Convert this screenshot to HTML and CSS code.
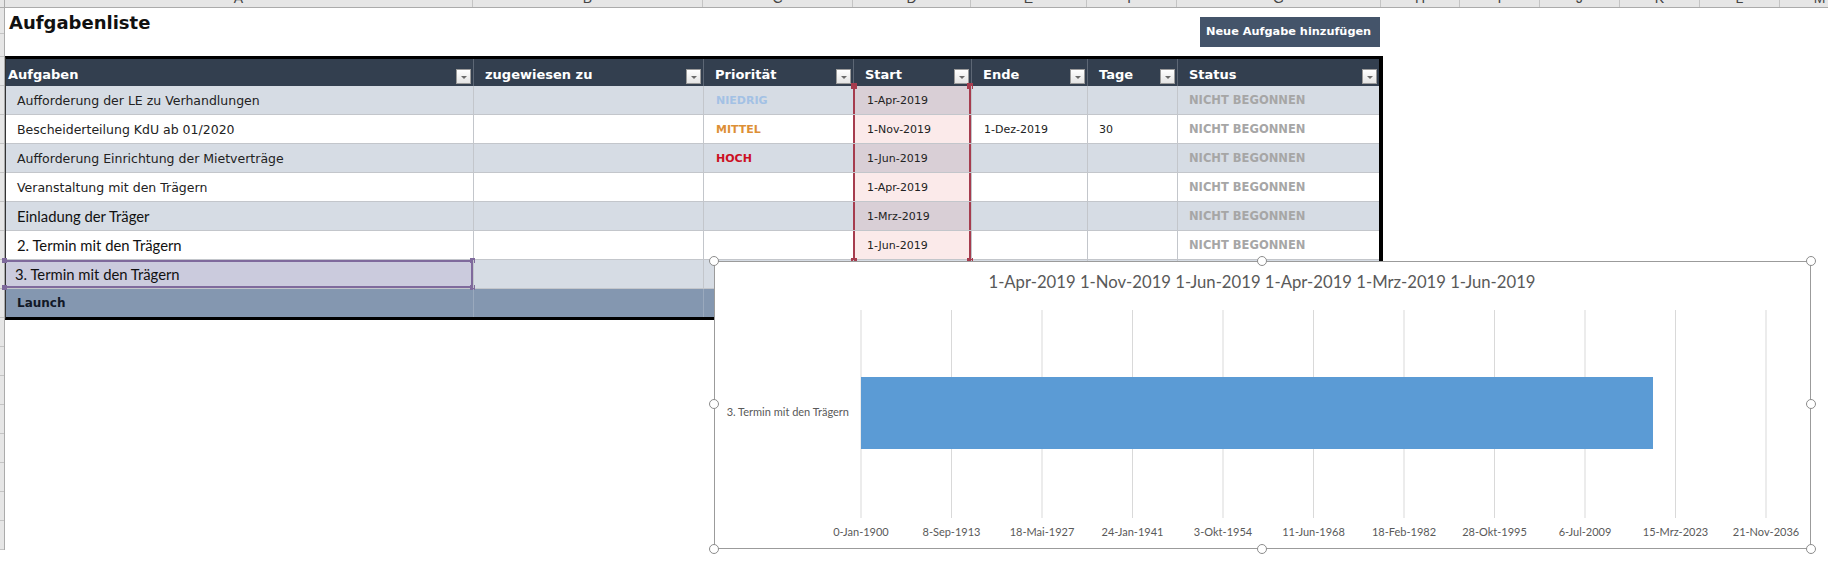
FILE: index.html
```html
<!DOCTYPE html>
<html lang="de">
<head>
<meta charset="utf-8">
<title>Aufgabenliste</title>
<link rel="stylesheet" href="styles.css">
</head>
<body>
<div class="app">
  <div class="colhdr">
    <div class="ch corner"></div>
    <div class="ch w-a"><span>A</span></div>
    <div class="ch w-b"><span>B</span></div>
    <div class="ch w-c"><span>C</span></div>
    <div class="ch w-d"><span>D</span></div>
    <div class="ch w-e"><span>E</span></div>
    <div class="ch w-f"><span>F</span></div>
    <div class="ch w-g"><span>G</span></div>
    <div class="ch w-h"><span>H</span></div>
    <div class="ch w-i"><span>I</span></div>
    <div class="ch w-i"><span>J</span></div>
    <div class="ch w-i"><span>K</span></div>
    <div class="ch w-i"><span>L</span></div>
    <div class="ch w-i"><span>M</span></div>
  </div>
  <div class="body">
    <div class="rowhdr">
      <div class="rh r-first"></div>
      <div class="rh r-second"></div>
      <div class="rh r-hdr"></div>
      <div class="rh"></div><div class="rh"></div><div class="rh"></div><div class="rh"></div>
      <div class="rh"></div><div class="rh"></div><div class="rh"></div><div class="rh"></div>
      <div class="rh"></div><div class="rh"></div><div class="rh"></div><div class="rh"></div>
      <div class="rh"></div><div class="rh"></div><div class="rh"></div><div class="rh"></div>
    </div>
    <div class="sheet">
      <div class="toprow">
        <h1 class="title">Aufgabenliste</h1>
        <div class="btn">Neue Aufgabe hinzufügen</div>
      </div>
      <div class="tbl">
        <div class="row hdr">
          <div class="cell c1 first"><span>Aufgaben</span><i class="dd"></i></div>
          <div class="cell c2"><span>zugewiesen zu</span><i class="dd"></i></div>
          <div class="cell c3"><span>Priorität</span><i class="dd"></i></div>
          <div class="cell c4"><span>Start</span><i class="dd"></i></div>
          <div class="cell c5"><span>Ende</span><i class="dd"></i></div>
          <div class="cell c6"><span>Tage</span><i class="dd"></i></div>
          <div class="cell c7"><span>Status</span><i class="dd"></i></div>
        </div>
        <div class="row band">
          <div class="cell c1 gothic">Aufforderung der LE zu Verhandlungen</div>
          <div class="cell c2"></div>
          <div class="cell c3 prio low">NIEDRIG</div>
          <div class="cell c4 rng rng-top gothic date"><b class="hd hl"></b><b class="hd hr"></b>1-Apr-2019</div>
          <div class="cell c5"></div>
          <div class="cell c6"></div>
          <div class="cell c7 status">NICHT BEGONNEN</div>
        </div>
        <div class="row">
          <div class="cell c1 gothic">Bescheiderteilung KdU ab 01/2020</div>
          <div class="cell c2"></div>
          <div class="cell c3 prio mid">MITTEL</div>
          <div class="cell c4 rng gothic date">1-Nov-2019</div>
          <div class="cell c5 gothic date">1-Dez-2019</div>
          <div class="cell c6 gothic date">30</div>
          <div class="cell c7 status">NICHT BEGONNEN</div>
        </div>
        <div class="row band">
          <div class="cell c1 gothic">Aufforderung Einrichtung der Mietverträge</div>
          <div class="cell c2"></div>
          <div class="cell c3 prio high">HOCH</div>
          <div class="cell c4 rng gothic date">1-Jun-2019</div>
          <div class="cell c5"></div>
          <div class="cell c6"></div>
          <div class="cell c7 status">NICHT BEGONNEN</div>
        </div>
        <div class="row">
          <div class="cell c1 gothic">Veranstaltung mit den Trägern</div>
          <div class="cell c2"></div>
          <div class="cell c3"></div>
          <div class="cell c4 rng gothic date">1-Apr-2019</div>
          <div class="cell c5"></div>
          <div class="cell c6"></div>
          <div class="cell c7 status">NICHT BEGONNEN</div>
        </div>
        <div class="row band">
          <div class="cell c1 calibri">Einladung der Träger</div>
          <div class="cell c2"></div>
          <div class="cell c3"></div>
          <div class="cell c4 rng gothic date">1-Mrz-2019</div>
          <div class="cell c5"></div>
          <div class="cell c6"></div>
          <div class="cell c7 status">NICHT BEGONNEN</div>
        </div>
        <div class="row">
          <div class="cell c1 calibri">2. Termin mit den Trägern</div>
          <div class="cell c2"></div>
          <div class="cell c3"></div>
          <div class="cell c4 rng rng-bottom gothic date"><b class="bm bl"></b><b class="bm br"></b>1-Jun-2019</div>
          <div class="cell c5"></div>
          <div class="cell c6"></div>
          <div class="cell c7 status">NICHT BEGONNEN</div>
        </div>
        <div class="row band">
          <div class="cell c1 calibri selected"><b class="sh s1"></b><b class="sh s2"></b><b class="sh s3"></b><b class="sh s4"></b>3. Termin mit den Trägern</div>
          <div class="cell c2"></div>
          <div class="cell c3"></div>
          <div class="cell c4"></div>
          <div class="cell c5"></div>
          <div class="cell c6"></div>
          <div class="cell c7"></div>
        </div>
        <div class="row launch">
          <div class="cell c1 launch-t">Launch</div>
          <div class="cell c2"></div>
          <div class="cell c3"></div>
          <div class="cell c4"></div>
          <div class="cell c5"></div>
          <div class="cell c6"></div>
          <div class="cell c7"></div>
        </div>
      </div>
    </div>
  </div>

  <div class="chart">
    <svg class="chart-svg" width="1096" height="287" viewBox="0 0 1096 287" xmlns="http://www.w3.org/2000/svg">
      <text class="ctitle" x="548" y="27" text-anchor="middle">1-Apr-2019 1-Nov-2019 1-Jun-2019 1-Apr-2019 1-Mrz-2019 1-Jun-2019</text>
      <g class="grid">
        <line x1="147" y1="49" x2="147" y2="257"/>
        <line x1="237.5" y1="49" x2="237.5" y2="257"/>
        <line x1="328" y1="49" x2="328" y2="257"/>
        <line x1="418.5" y1="49" x2="418.5" y2="257"/>
        <line x1="509" y1="49" x2="509" y2="257"/>
        <line x1="599.5" y1="49" x2="599.5" y2="257"/>
        <line x1="690" y1="49" x2="690" y2="257"/>
        <line x1="780.5" y1="49" x2="780.5" y2="257"/>
        <line x1="871" y1="49" x2="871" y2="257"/>
        <line x1="961.5" y1="49" x2="961.5" y2="257"/>
        <line x1="1052" y1="49" x2="1052" y2="257"/>
      </g>
      <rect x="147" y="116" width="792" height="72" fill="#5b9bd5"/>
      <text class="clab" x="135" y="155" text-anchor="end">3. Termin mit den Trägern</text>
      <g class="clab">
        <text x="147" y="275" text-anchor="middle">0-Jan-1900</text>
        <text x="237.5" y="275" text-anchor="middle">8-Sep-1913</text>
        <text x="328" y="275" text-anchor="middle">18-Mai-1927</text>
        <text x="418.5" y="275" text-anchor="middle">24-Jan-1941</text>
        <text x="509" y="275" text-anchor="middle">3-Okt-1954</text>
        <text x="599.5" y="275" text-anchor="middle">11-Jun-1968</text>
        <text x="690" y="275" text-anchor="middle">18-Feb-1982</text>
        <text x="780.5" y="275" text-anchor="middle">28-Okt-1995</text>
        <text x="871" y="275" text-anchor="middle">6-Jul-2009</text>
        <text x="961.5" y="275" text-anchor="middle">15-Mrz-2023</text>
        <text x="1052" y="275" text-anchor="middle">21-Nov-2036</text>
      </g>
    </svg>
    <i class="knob k-tl"></i><i class="knob k-tm"></i><i class="knob k-tr"></i>
    <i class="knob k-ml"></i><i class="knob k-mr"></i>
    <i class="knob k-bl"></i><i class="knob k-bm"></i><i class="knob k-br"></i>
  </div>
</div>
</body>
</html>
```

FILE: styles.css
```css
* { box-sizing: border-box; }
html, body { margin: 0; padding: 0; background: #fff; }
.app {
  position: relative;
  width: 1828px;
  height: 573px;
  overflow: hidden;
  font-family: "DejaVu Sans", "Liberation Sans", sans-serif;
  color: #1e1e1e;
}

/* column header strip */
.colhdr {
  display: flex;
  height: 8px;
  background: #e6e6e6;
  border-bottom: 1px solid #ababab;
}
.ch {
  flex: none;
  height: 7px;
  border-right: 1px solid #c4c4c4;
  display: flex;
  justify-content: center;
  align-items: flex-end;
  overflow: hidden;
  font-family: "Liberation Sans", sans-serif;
  font-size: 14px;
  color: #444;
}
.ch span { line-height: 14px; margin-bottom: 2px; }
.corner { width: 5px; border-right-color: #ababab; }
.w-a { width: 468px; }
.w-b { width: 230px; }
.w-c { width: 150px; }
.w-d { width: 118px; }
.w-e { width: 116px; }
.w-f { width: 90px; }
.w-g { width: 204px; }
.w-h { width: 79px; }
.w-i { width: 80px; }

/* body */
.body { display: flex; }
.rowhdr {
  flex: none;
  width: 5px;
  background: #e6e6e6;
  border-right: 1px solid #ababab;
  display: flex;
  flex-direction: column;
}
.rh { height: 29px; border-bottom: 1px solid #c4c4c4; flex: none; }
.r-first { height: 26px; }
.r-second { height: 23px; }

.sheet { flex: none; width: 1378px; }

.toprow {
  height: 48px;
  display: flex;
  justify-content: space-between;
  align-items: flex-start;
}
.title {
  margin: 0;
  padding: 4px 0 0 4px;
  font-size: 18px;
  line-height: 22px;
  font-weight: bold;
  color: #111;
}
.btn {
  margin: 9px 3px 0 0;
  width: 180px;
  height: 30px;
  background: #44546a;
  color: #fff;
  font-weight: bold;
  font-size: 11.3px;
  line-height: 30px;
  padding-left: 6px;
  white-space: nowrap;
}

/* table */
.tbl {
  border-top: 3px solid #000;
  border-bottom: 3px solid #000;
  border-left: 1px solid #333;
  border-right: 4px solid #000;
}
.row {
  display: flex;
  height: 29px;
  border-bottom: 1px solid #c3c6cb;
  background: #fff;
}
.row.band { background: #d6dce4; }
.row.hdr {
  height: 27px;
  background: #333f4f;
  border-bottom: none;
}
.row.launch {
  height: 28px;
  background: #8497b0;
  border-bottom: none;
}
.cell {
  flex: none;
  position: relative;
  height: 100%;
  display: flex;
  align-items: center;
  padding-left: 11px;
  border-left: 1px solid #c3c6cb;
  font-size: 12.5px;
  white-space: nowrap;
}
.cell.c1 { border-left: none; }
.c1 { width: 467px; }
.c2 { width: 230px; }
.c3 { width: 150px; }
.c4 { width: 118px; }
.c5 { width: 116px; }
.c6 { width: 90px; }
.c7 { width: 202px; }

.hdr .cell {
  align-items: flex-end;
  justify-content: space-between;
  padding: 0 2px 2px 11px;
  border-left-color: #5d6775;
  color: #fff;
  font-weight: bold;
  font-size: 13px;
}
.hdr .cell span { line-height: 16px; margin-bottom: 1px; }
.hdr .cell.first { padding-left: 2px; }
.launch .cell { border-left-color: #9aa9bd; }

.dd {
  display: block;
  width: 15px;
  height: 15px;
  background: linear-gradient(#ffffff, #e4e4e4);
  border: 1px solid #9a9a9a;
  position: relative;
}
.dd::after {
  content: "";
  position: absolute;
  left: 4px;
  top: 6px;
  border-left: 3px solid transparent;
  border-right: 3px solid transparent;
  border-top: 3px solid #6b6b6b;
}

.gothic { font-family: "DejaVu Sans", sans-serif; font-size: 12.5px; color: #222; }
.calibri { font-family: "Lato", "Liberation Sans", sans-serif; font-size: 14.8px; color: #111; }
.date { font-size: 11px; }
.c6.date { padding-left: 11px; }
.c5.date { padding-left: 12px; }

.prio { font-weight: bold; font-size: 11px; padding-left: 12px; }
.low { color: #a3c1e4; }
.mid { color: #dd8f36; }
.high { color: #cc1023; }
.status { font-weight: bold; font-size: 11.5px; color: #a6a6a6; }

/* selected start range */
.rng {
  border-left: 2px solid #a63c4e;
  border-right: 2px solid #a63c4e;
  padding-left: 12px;
  background: #fbeaea;
}
.band .rng { background: #d9cfd6; }
.hd {
  position: absolute;
  top: -3px;
  width: 6px;
  height: 6px;
  background: #a63c4e;
}
.hl { left: -4px; }
.hr { right: -4px; }
.bm {
  position: absolute;
  bottom: -2px;
  width: 6px;
  height: 3px;
  background: #a63c4e;
}
.bl { left: -4px; }
.br { right: -4px; }

/* selected cell */
.selected {
  background: #cbcbdd;
  border: 2px solid #7f6a9c;
  padding-left: 9px;
}
.sh {
  position: absolute;
  width: 5px;
  height: 5px;
  background: #7f6a9c;
}
.s1 { left: -4px; top: -4px; }
.s2 { right: -4px; top: -4px; }
.s3 { left: -4px; bottom: -4px; }
.s4 { right: -4px; bottom: -4px; }

.launch-t {
  font-weight: bold;
  font-size: 12px;
  color: #111827;
}

/* chart */
.chart {
  position: absolute;
  left: 714px;
  top: 261px;
  width: 1097px;
  height: 288px;
  background: #fff;
  border: 1px solid #9b9b9b;
}
.chart-svg { display: block; position: absolute; left: -1px; top: -1px; }
.grid line { stroke: #d9d9d9; stroke-width: 1; }
.ctitle { font-family: "Lato", "Liberation Sans", sans-serif; font-size: 16.7px; fill: #595959; }
.clab, .clab text { font-family: "Lato", "Liberation Sans", sans-serif; font-size: 11px; fill: #595959; }
.knob {
  position: absolute;
  width: 10px;
  height: 10px;
  border-radius: 50%;
  background: #fff;
  border: 1.5px solid #8c8c8c;
}
.k-tl { left: -6px; top: -6px; }
.k-tm { left: 542px; top: -6px; }
.k-tr { right: -6px; top: -6px; }
.k-ml { left: -6px; top: 137px; }
.k-mr { right: -6px; top: 137px; }
.k-bl { left: -6px; bottom: -6px; }
.k-bm { left: 542px; bottom: -6px; }
.k-br { right: -6px; bottom: -6px; }
```
